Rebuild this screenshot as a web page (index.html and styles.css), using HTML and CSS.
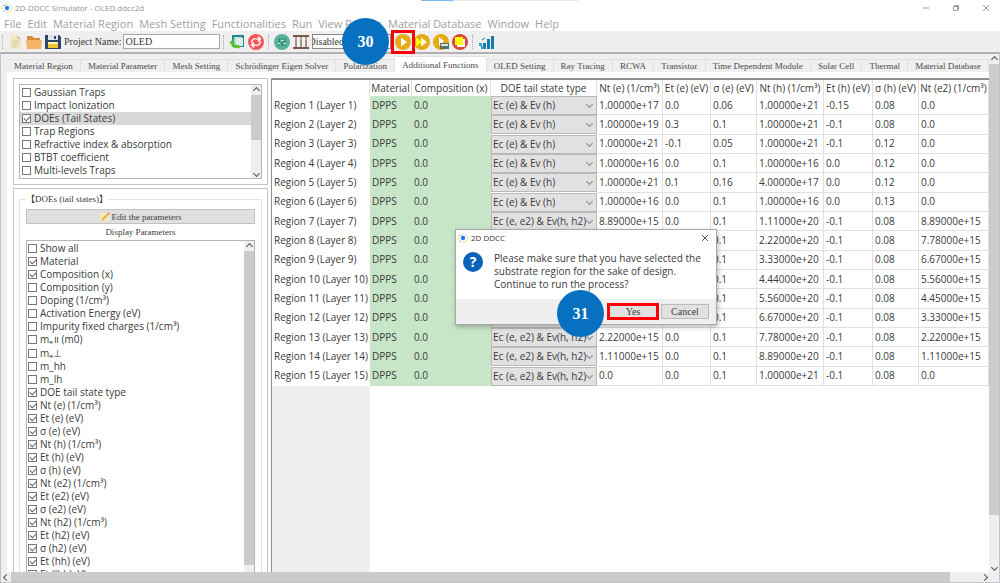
FILE: index.html
```html
<!DOCTYPE html>
<html lang="en">
<head>
<meta charset="utf-8">
<title>2D-DDCC Simulator - OLED.ddcc2d</title>
<link rel="stylesheet" href="styles.css">
</head>
<body>
<svg class="defs" aria-hidden="true">
  <symbol id="logo" viewBox="0 0 12 10"><circle cx="6" cy="5" r="2.2" fill="#1f7fe0"/><path d="M1 6.500C1 3 3.500 1.500 6 1M6 9.200C9 9 11 7.500 11 4.500" fill="none" stroke="#f0c84a" stroke-dasharray="2 1"/><path d="M2 2.500h2M8.500 2.500l1.500 1M2 8l2 .5" stroke="#8cc8f0"/></symbol>
</svg>
<header class="titlebar">
  <svg class="logo"><use href="#logo"/></svg>
  <span class="grow">2D-DDCC Simulator - OLED.ddcc2d</span>
  <button class="winbtn" aria-label="Minimize"><svg viewBox="0 0 8 8"><path d="M1 4h6"/></svg></button>
  <button class="winbtn" aria-label="Restore"><svg viewBox="0 0 8 8"><path d="M1.500 2.500h4v4h-4zM2.500 2.500v-1h4v4h-1"/></svg></button>
  <button class="winbtn" aria-label="Close"><svg viewBox="0 0 8 8"><path d="M1 1l6 6M7 1l-6 6"/></svg></button>
  <span class="progress"></span>
</header>
<nav class="menubar">
  <button>File</button><button>Edit</button><button>Material Region</button><button>Mesh Setting</button><button>Functionalities</button><button>Run</button><button>View Results</button><button>Material Database</button><button>Window</button><button>Help</button>
</nav>
<div class="toolbar">
  <span class="grip"></span>
  <button class="tool" aria-label="New"><svg viewBox="0 0 16 16"><path d="M3 1h7l4 4v10H3z" fill="#f0e8c4"/><path d="M10 1v4h4z" fill="#d8cfa4"/><path d="M5 7h7M5 9h7M5 11h7M5 13h5" stroke="#d9d0aa"/></svg></button>
  <button class="tool" aria-label="Open"><svg viewBox="0 0 16 16"><path d="M1 2h5l2 2h6v3H1z" fill="#d98a3a"/><path d="M0 6h16l-1 9H1z" fill="#f5b368"/></svg></button>
  <button class="tool save" aria-label="Save"><svg viewBox="0 0 16 16"><path d="M0 1h14l2 2v12H0z" fill="#35456a"/><path d="M3 1h10v5H3z" fill="#dfe5ee"/><path d="M9 2h2v3H9z" fill="#35456a"/><path d="M3 8h10v6H3z" fill="#f2c230"/><path d="M3 8h10v2H3z" fill="#fff1b0"/></svg></button>
  <label for="project">Project Name:</label>
  <input id="project" class="project" type="text" value="OLED">
  <span class="grip wide"></span>
  <button class="tool" aria-label="Import"><svg viewBox="0 0 16 16"><path d="M3 1h12v12H3z" fill="#238a85"/><path d="M5 3h8v8H5z" fill="#b9ddd6"/><path d="M7 4h7v8H7z" fill="#dceee9"/><path d="M0 9l4-4v2c0 3 2 4 6 4l1 3c-5 1-8 0-9-4z" fill="#62c22f"/></svg></button>
  <button class="tool refresh" aria-label="Refresh"><svg viewBox="0 0 16 16"><circle cx="8" cy="8" r="8" fill="#f4575a"/><g fill="none" stroke="#fff" stroke-width="1.300"><path d="M4 9c-1-3 2-5 5-4h3M12 7c1 3-2 5-5 4H4"/><path d="M10 2.500L12.500 5 10 7.500M6 8.500L3.500 11 6 13.500"/></g></svg></button>
  <span class="grip wide"></span>
  <button class="tool" aria-label="Solver settings"><svg viewBox="0 0 16 16"><circle cx="8" cy="8" r="8" fill="#59b39b"/><path d="M5 4v8M8 4v8M11 4v8" stroke="#2f7566"/><path d="M4 9h2v1H4zM7 6h2v1H7zM10 9h2v1h-2z" fill="#e8fff8"/></svg></button>
  <button class="tool" aria-label="Structure"><svg viewBox="0 0 16 16"><path d="M0 1h16v2H0zM0 13h16v2H0z" fill="#77584b"/><path d="M3 3v10M8 3v10M13 3v10" stroke="#8a7268" stroke-width="1.500"/><path d="M2 5h2M7 5h2M12 5h2" stroke="#d6bdb0"/></svg></button>
  <select class="mode" aria-label="Mode"><option>Disabled</option></select>
  <span class="callout callout-30">30</span>
  <button class="tool runbtn" aria-label="Run"><svg viewBox="0 0 16 16"><circle cx="8" cy="8" r="8" fill="#e5ab16"/><path d="M6 3.500l6 4.500-6 4.500z" fill="#fff"/></svg></button>
  <button class="tool" aria-label="Run all"><svg viewBox="0 0 16 16"><circle cx="8" cy="8" r="8" fill="#e5ab16"/><path d="M7 3.500l6 4.500-6 4.500z" fill="#fffbd8"/><path d="M2 3.500l6 4.500-6 4.500z" fill="#ff0"/></svg></button>
  <button class="tool" aria-label="Run script"><svg viewBox="0 0 16 16"><circle cx="8" cy="8" r="8" fill="#e5ab16"/><path d="M6 3l5 4-5 5z" fill="#fff"/><path d="M7 9h9v6H7z" fill="#53706c"/><path d="M8 10h7v2H8z" fill="#d9e4df"/></svg></button>
  <button class="tool" aria-label="Stop"><svg viewBox="0 0 16 16"><circle cx="8" cy="8" r="8" fill="#d9483a"/><path d="M6 5h7v8H5z" fill="#fff"/><path d="M3 3h8v8H3z" fill="#ff0"/></svg></button>
  <span class="grip wide"></span>
  <button class="tool" aria-label="Plot"><svg viewBox="0 0 16 16"><path d="M5 9h3v6H5zM9 5h3v10H9zM13 2h3v13h-3z" fill="#1879ac"/><path d="M1 9h3v3H1zM3 12h3v3H3z" fill="#35a4cc"/><path d="M4 6l3-2" stroke="#1879ac"/></svg></button>
</div>

<main class="workspace">
  <div class="page">
    <nav class="tabs" role="tablist">
      <button role="tab">Material Region</button><button role="tab">Material Parameter</button><button role="tab">Mesh Setting</button><button role="tab">Schrödinger Eigen Solver</button><button role="tab">Polarization</button><button role="tab" class="active" aria-selected="true">Additional Functions</button><button role="tab">OLED Setting</button><button role="tab">Ray Tracing</button><button role="tab">RCWA</button><button role="tab">Transistor</button><button role="tab">Time Dependent Module</button><button role="tab">Solar Cell</button><button role="tab">Thermal</button><button role="tab">Material Database</button>
    </nav>
    <div class="content">
      <aside class="side">
        <section class="panel">
          <div class="listbox">
            <div class="items">
              <label><input type="checkbox">Gaussian Traps</label>
              <label><input type="checkbox">Impact Ionization</label>
              <label class="selected"><input type="checkbox" checked>DOEs (Tail States)</label>
              <label><input type="checkbox">Trap Regions</label>
              <label><input type="checkbox">Refractive index &amp; absorption</label>
              <label><input type="checkbox">BTBT coefficient</label>
              <label><input type="checkbox">Multi-levels Traps</label>
            </div>
            <div class="vscroll"><i class="arrow up"></i><i class="thumb short"></i><i class="arrow down"></i></div>
          </div>
        </section>
        <section class="panel fill">
          <fieldset class="group">
            <legend>【DOEs (tail states)】</legend>
            <button class="edit"><svg viewBox="0 0 10 10"><path d="M0 1h9v8H0z" fill="#f1e9c9"/><path d="M2 8l6-6" stroke="#f2b61d" stroke-width="1.800"/><path d="M8 2l1-1" stroke="#e8756a" stroke-width="1.800"/></svg>Edit the parameters</button>
            <p class="caption">Display Parameters</p>
            <div class="listbox params">
              <div class="items">
                <label><input type="checkbox">Show all</label>
                <label><input type="checkbox" checked>Material</label>
                <label><input type="checkbox" checked>Composition (x)</label>
                <label><input type="checkbox">Composition (y)</label>
                <label><input type="checkbox">Doping (1/cm³)</label>
                <label><input type="checkbox">Activation Energy (eV)</label>
                <label><input type="checkbox">Impurity fixed charges (1/cm³)</label>
                <label><input type="checkbox">mₑ॥ (m0)</label>
                <label class="tall"><input type="checkbox">mₑ⊥</label>
                <label><input type="checkbox">m_hh</label>
                <label><input type="checkbox">m_lh</label>
                <label><input type="checkbox" checked>DOE tail state type</label>
                <label><input type="checkbox" checked>Nt (e) (1/cm³)</label>
                <label><input type="checkbox" checked>Et (e) (eV)</label>
                <label><input type="checkbox" checked>σ (e) (eV)</label>
                <label><input type="checkbox" checked>Nt (h) (1/cm³)</label>
                <label><input type="checkbox" checked>Et (h) (eV)</label>
                <label><input type="checkbox" checked>σ (h) (eV)</label>
                <label><input type="checkbox" checked>Nt (e2) (1/cm³)</label>
                <label><input type="checkbox" checked>Et (e2) (eV)</label>
                <label><input type="checkbox" checked>σ (e2) (eV)</label>
                <label><input type="checkbox" checked>Nt (h2) (1/cm³)</label>
                <label><input type="checkbox" checked>Et (h2) (eV)</label>
                <label><input type="checkbox" checked>σ (h2) (eV)</label>
                <label><input type="checkbox" checked>Et (hh) (eV)</label>
                <label><input type="checkbox" checked>Et (lh) (eV)</label>
              </div>
              <div class="vscroll"><i class="arrow up"></i><i class="thumb grow"></i><i class="gap"></i></div>
            </div>
          </fieldset>
        </section>
      </aside>
      <section class="grid">
        <table>
          <colgroup><col class="c-region"><col class="c-material"><col class="c-comp"><col class="c-type"><col class="c-nte"><col class="c-et"><col class="c-sigma"><col class="c-nth"><col class="c-eth"><col class="c-sigma"><col></colgroup>
          <thead><tr><th></th><th>Material</th><th>Composition (x)</th><th>DOE tail state type</th><th>Nt (e) (1/cm³)</th><th>Et (e) (eV)</th><th>σ (e) (eV)</th><th>Nt (h) (1/cm³)</th><th>Et (h) (eV)</th><th>σ (h) (eV)</th><th>Nt (e2) (1/cm³)</th></tr></thead>
          <tbody>
            <tr><th>Region 1 (Layer 1)</th><td>DPPS</td><td>0.0</td><td><div class="pick"><select aria-label="Type 1"><option>Ec (e) &amp; Ev (h)</option></select></div></td><td>1.00000e+17</td><td>0.0</td><td>0.06</td><td>1.00000e+21</td><td>-0.15</td><td>0.08</td><td>0.0</td></tr>
            <tr><th>Region 2 (Layer 2)</th><td>DPPS</td><td>0.0</td><td><div class="pick"><select aria-label="Type 2"><option>Ec (e) &amp; Ev (h)</option></select></div></td><td>1.00000e+19</td><td>0.3</td><td>0.1</td><td>1.00000e+21</td><td>-0.1</td><td>0.08</td><td>0.0</td></tr>
            <tr><th>Region 3 (Layer 3)</th><td>DPPS</td><td>0.0</td><td><div class="pick"><select aria-label="Type 3"><option>Ec (e) &amp; Ev (h)</option></select></div></td><td>1.00000e+21</td><td>-0.1</td><td>0.05</td><td>1.00000e+21</td><td>-0.1</td><td>0.12</td><td>0.0</td></tr>
            <tr><th>Region 4 (Layer 4)</th><td>DPPS</td><td>0.0</td><td><div class="pick"><select aria-label="Type 4"><option>Ec (e) &amp; Ev (h)</option></select></div></td><td>1.00000e+16</td><td>0.0</td><td>0.1</td><td>1.00000e+16</td><td>0.0</td><td>0.12</td><td>0.0</td></tr>
            <tr><th>Region 5 (Layer 5)</th><td>DPPS</td><td>0.0</td><td><div class="pick"><select aria-label="Type 5"><option>Ec (e) &amp; Ev (h)</option></select></div></td><td>1.00000e+21</td><td>0.1</td><td>0.16</td><td>4.00000e+17</td><td>0.0</td><td>0.12</td><td>0.0</td></tr>
            <tr><th>Region 6 (Layer 6)</th><td>DPPS</td><td>0.0</td><td><div class="pick"><select aria-label="Type 6"><option>Ec (e) &amp; Ev (h)</option></select></div></td><td>1.00000e+16</td><td>0.0</td><td>0.1</td><td>1.00000e+16</td><td>0.0</td><td>0.13</td><td>0.0</td></tr>
            <tr><th>Region 7 (Layer 7)</th><td>DPPS</td><td>0.0</td><td><div class="pick"><select aria-label="Type 7"><option>Ec (e, e2) &amp; Ev(h, h2)</option></select></div></td><td>8.89000e+15</td><td>0.0</td><td>0.1</td><td>1.11000e+20</td><td>-0.1</td><td>0.08</td><td>8.89000e+15</td></tr>
            <tr><th>Region 8 (Layer 8)</th><td>DPPS</td><td>0.0</td><td><div class="pick"><select aria-label="Type 8"><option>Ec (e, e2) &amp; Ev(h, h2)</option></select></div></td><td>7.78000e+15</td><td>0.0</td><td>0.1</td><td>2.22000e+20</td><td>-0.1</td><td>0.08</td><td>7.78000e+15</td></tr>
            <tr><th>Region 9 (Layer 9)</th><td>DPPS</td><td>0.0</td><td><div class="pick"><select aria-label="Type 9"><option>Ec (e, e2) &amp; Ev(h, h2)</option></select></div></td><td>6.67000e+15</td><td>0.0</td><td>0.1</td><td>3.33000e+20</td><td>-0.1</td><td>0.08</td><td>6.67000e+15</td></tr>
            <tr><th>Region 10 (Layer 10)</th><td>DPPS</td><td>0.0</td><td><div class="pick"><select aria-label="Type 10"><option>Ec (e, e2) &amp; Ev(h, h2)</option></select></div></td><td>5.56000e+15</td><td>0.0</td><td>0.1</td><td>4.44000e+20</td><td>-0.1</td><td>0.08</td><td>5.56000e+15</td></tr>
            <tr><th>Region 11 (Layer 11)</th><td>DPPS</td><td>0.0</td><td><div class="pick"><select aria-label="Type 11"><option>Ec (e, e2) &amp; Ev(h, h2)</option></select></div></td><td>4.45000e+15</td><td>0.0</td><td>0.1</td><td>5.56000e+20</td><td>-0.1</td><td>0.08</td><td>4.45000e+15</td></tr>
            <tr><th>Region 12 (Layer 12)</th><td>DPPS</td><td>0.0</td><td><div class="pick"><select aria-label="Type 12"><option>Ec (e, e2) &amp; Ev(h, h2)</option></select></div></td><td>3.33000e+15</td><td>0.0</td><td>0.1</td><td>6.67000e+20</td><td>-0.1</td><td>0.08</td><td>3.33000e+15</td></tr>
            <tr><th>Region 13 (Layer 13)</th><td>DPPS</td><td>0.0</td><td><div class="pick"><select aria-label="Type 13"><option>Ec (e, e2) &amp; Ev(h, h2)</option></select></div></td><td>2.22000e+15</td><td>0.0</td><td>0.1</td><td>7.78000e+20</td><td>-0.1</td><td>0.08</td><td>2.22000e+15</td></tr>
            <tr><th>Region 14 (Layer 14)</th><td>DPPS</td><td>0.0</td><td><div class="pick"><select aria-label="Type 14"><option>Ec (e, e2) &amp; Ev(h, h2)</option></select></div></td><td>1.11000e+15</td><td>0.0</td><td>0.1</td><td>8.89000e+20</td><td>-0.1</td><td>0.08</td><td>1.11000e+15</td></tr>
            <tr><th>Region 15 (Layer 15)</th><td>DPPS</td><td>0.0</td><td><div class="pick"><select aria-label="Type 15"><option>Ec (e, e2) &amp; Ev(h, h2)</option></select></div></td><td>0.0</td><td>0.0</td><td>0.1</td><td>1.00000e+21</td><td>-0.1</td><td>0.08</td><td>0.0</td></tr>
          </tbody>
        </table>
        <div class="rowhead-rest"></div>
      </section>
    </div>
  </div>
  <div class="vscroll main"><i class="arrow up"></i><i class="thumb page-thumb"></i><i class="arrow down"></i></div>
</main>
<div class="hscroll"><i class="arrow left"></i><i class="thumb"></i><i class="arrow right"></i></div>

<div class="dialog" role="dialog" aria-labelledby="dlg-title">
  <div class="dlg-head"><svg class="logo"><use href="#logo"/></svg><span id="dlg-title" class="grow">2D DDCC</span>
    <button class="dlg-close" aria-label="Close dialog"><svg viewBox="0 0 8 8"><path d="M1 1l6 6M7 1l-6 6"/></svg></button></div>
  <div class="dlg-body"><span class="question">?</span>
    <p>Please make sure that you have selected the<br>substrate region for the sake of design.<br>Continue to run the process?</p></div>
  <div class="dlg-foot"><button class="yes">Yes</button><button>Cancel</button></div>
  <span class="callout callout-31">31</span>
</div>
</body>
</html>
```
FILE: styles.css
```css
:root {
  --sans: "Open Sans", "Noto Sans", "DejaVu Sans", sans-serif;
  --serif: "Liberation Serif", "Noto Sans CJK TC", serif;
  --line: #c3c4ca;
  --face: #efefef;
  --thumb: #cbcbcb;
}
* { box-sizing: border-box; }
body {
  margin: 0;
  height: 100vh;
  display: flex;
  flex-direction: column;
  overflow: hidden;
  position: relative;
  background: #fff;
  color: #3a3a3a;
  font: 10px/13px var(--sans);
}
button, input, select { font: inherit; color: inherit; margin: 0; border-radius: 0; }
button { border: 0; padding: 0; background: none; white-space: nowrap; }
.defs { position: absolute; width: 0; height: 0; }
.grow { flex: 1; }
.logo { width: 12px; height: 10px; flex: none; }

.titlebar { position: relative; display: flex; align-items: center; gap: 2px; height: 15px; padding-left: 1px; color: #949494; flex: none; font: 8px/12px var(--sans); }
.winbtn { width: 28px; height: 15px; display: grid; place-items: center; }
.winbtn svg, .dlg-close svg { width: 8px; height: 8px; fill: none; stroke: #999; stroke-width: 1; }
.progress { position: absolute; top: 0; left: 421px; width: 157px; height: 1px; background: #e8e8e8; border-left: 32px solid #7fb8ee; }

.menubar { display: flex; gap: 6px; height: 16px; padding-left: 4px; align-items: center; color: #a0a0a0; font-size: 11px; flex: none; }

.toolbar { display: flex; align-items: center; gap: 2px; height: 21px; padding-left: 2px; background: var(--face); font: 10px/13px var(--serif); flex: none; }
.tool { width: 17px; height: 16px; flex: none; }
.tool svg { display: block; width: 16px; height: 16px; }
.grip { width: 3px; height: 14px; border-left: 1px dotted #aaa; flex: none; }
.grip.wide { margin: 0 1px; }
.project { width: 97px; height: 15px; border: 1px solid #a8a8a8; padding: 0 1px; background: #fff; }
.mode { width: 79px; height: 15px; border: 1px solid #888; background: #fff; padding: 0; text-indent: -5px; appearance: none; }
.runbtn { width: 16px; outline: 3px solid #fb0007; outline-offset: 1px; margin: 0 1px 0 2px; z-index: 4; }
.callout { position: absolute; display: grid; place-items: center; width: 47px; height: 47px; border-radius: 50%; background: #0770c0; color: #fff; font: bold 16px/20px var(--serif); }
.callout-30 { left: 342px; top: 18px; z-index: 3; }

.workspace { flex: 1; min-height: 0; display: flex; border-top: 2px solid #b0b0b5; border-left: 1px solid var(--line); border-right: 1px solid var(--line); background: var(--face); }
.page { flex: 1; min-width: 0; display: flex; flex-direction: column; padding-left: 6px; }
.tabs { display: flex; height: 18px; align-items: flex-end; overflow: hidden; font: 9px/12px var(--serif); flex: none; }
.tabs button { flex: 1 0 auto; height: 13px; border: 1px solid #e2e2e2; border-width: 1px 1px 0 0; color: #4a4a4a; }
.tabs .active { height: 16px; background: #fff; }
.content { flex: 1; min-height: 0; display: flex; gap: 3px; background: #fff; padding: 6px 0 0 6px; }

.side { width: 255px; flex: none; display: flex; flex-direction: column; gap: 3px; }
.panel { border: 1px solid var(--line); padding: 5px; }
.panel.fill { flex: 1; min-height: 0; border-bottom: 0; padding: 4px 5px 0; display: flex; }
.listbox { display: flex; border: 1px solid #b4b5bc; }
.items { flex: 1; overflow: hidden; padding: 1px 0; }
.items label { display: flex; align-items: center; gap: 3px; height: 13px; padding-left: 2px; white-space: nowrap; }
.params .items label { padding-left: 1px; }
.items .tall { height: 14px; }
.items .selected { background: #d8d8d8; }
.items input { appearance: none; position: relative; width: 9px; height: 9px; border: 1px solid #777; background: #fff; flex: none; }
.items input:checked::after { content: ""; position: absolute; left: 1px; top: 1px; width: 5px; height: 3px; border: solid #666; border-width: 0 0 1px 1px; transform: rotate(-45deg); }
.group { flex: 1; min-width: 0; min-height: 0; margin: 0; border: 1px solid #e4e4e4; border-bottom: 0; padding: 4px 6px 0; display: flex; flex-direction: column; }
.group legend { font: 9px/12px var(--serif); padding: 0; }
.edit { display: flex; align-items: center; justify-content: center; gap: 2px; height: 15px; border: 1px solid #c2c2c2; background: #e0e0e0; font: 9px/12px var(--serif); flex: none; }
.edit svg { width: 10px; height: 10px; }
.caption { margin: 0; text-align: center; font: 9px/16px var(--serif); flex: none; }
.params { flex: 1; min-height: 0; border-bottom: 0; overflow: hidden; }

.vscroll { width: 10px; flex: none; background: var(--face); display: flex; flex-direction: column; }
.arrow { width: 10px; height: 10px; flex: none; display: grid; place-items: center; }
.arrow::before { content: ""; width: 4px; height: 4px; border: solid #555; border-width: 1px 0 0 1px; }
.up::before { transform: rotate(45deg); }
.down::before { transform: rotate(225deg); }
.left::before { transform: rotate(-45deg); }
.right::before { transform: rotate(135deg); }
.thumb { background: var(--thumb); }
.thumb.short { height: 45px; }
.thumb.grow { flex: 1; }
.vscroll .down { margin-top: auto; }
.gap { height: 7px; }
.page-thumb { height: 87%; }
.hscroll { display: flex; height: 11px; background: var(--face); border: 1px solid var(--line); border-top: 0; padding-right: 10px; flex: none; }
.hscroll .thumb { width: 95%; }
.hscroll .right { margin-left: auto; }

.grid { flex: 1; min-width: 0; overflow: hidden; border-top: 2px solid #8c8f96; border-left: 1px solid #8c8f96; display: flex; flex-direction: column; }
table { border-collapse: separate; border-spacing: 0; table-layout: fixed; width: 100%; height: 306px; flex: none; }
.c-region { width: 98px; }
.c-material { width: 42px; }
.c-comp { width: 79px; }
.c-type { width: 106px; }
.c-nte { width: 66px; }
.c-et { width: 48px; }
.c-sigma { width: 46px; }
.c-nth { width: 67px; }
.c-eth { width: 49px; }
th, td { padding: 0 2px; font-weight: 400; white-space: nowrap; text-align: left; border-right: 1px solid #e0e0e0; border-bottom: 1px solid #e0e0e0; }
thead th { padding: 0; height: 16px; text-align: center; border-bottom: 0; }
tbody th { border-color: transparent; }
tbody td:nth-child(2), tbody td:nth-child(3) { background: #c7e6c7; border-color: #cbe2cb; }
tbody td:nth-child(4) { padding: 0; border: 0; }
.pick { position: relative; height: 19px; background: #e1e1e1; border: 1px solid #b9b9b9; }
.pick::after { content: ""; position: absolute; right: 4px; top: 5px; width: 4px; height: 4px; border: solid #888; border-width: 0 1px 1px 0; transform: rotate(45deg); }
.pick select { appearance: none; display: block; width: 100%; height: 17px; border: 0; padding: 0 0 0 1px; background: none; }
.rowhead-rest { flex: 1; width: 98px; background: var(--face); }

.dialog { position: absolute; left: 455px; top: 229px; width: 262px; border: 1px solid #a9a9a9; background: #fff; box-shadow: 1px 2px 5px #0004; }
.dlg-head { display: flex; align-items: center; gap: 2px; height: 15px; padding-left: 1px; font: 8px/12px var(--sans); }
.dlg-close { width: 22px; display: grid; place-items: center; }
.dlg-close svg { stroke: #555; }
.dlg-body { display: flex; gap: 11px; padding: 7px 0 7px 7px; height: 54px; }
.dlg-body p { margin: 0; white-space: nowrap; }
.question { width: 20px; height: 20px; border-radius: 50%; background: #0b62bb; color: #fff; display: grid; place-items: center; font: bold 14px/18px var(--sans); }
.dlg-foot { display: flex; justify-content: flex-end; align-items: center; gap: 5px; height: 25px; padding-right: 7px; background: var(--face); font: 10px/12px var(--serif); }
.dlg-foot button { width: 48px; height: 15px; background: #e1e1e1; border: 1px solid #bbb; }
.dlg-foot .yes { height: 11px; border: 0; outline: 3px solid #fb0007; width: 46px; }
.callout-31 { left: 101px; top: 60px; }
```
